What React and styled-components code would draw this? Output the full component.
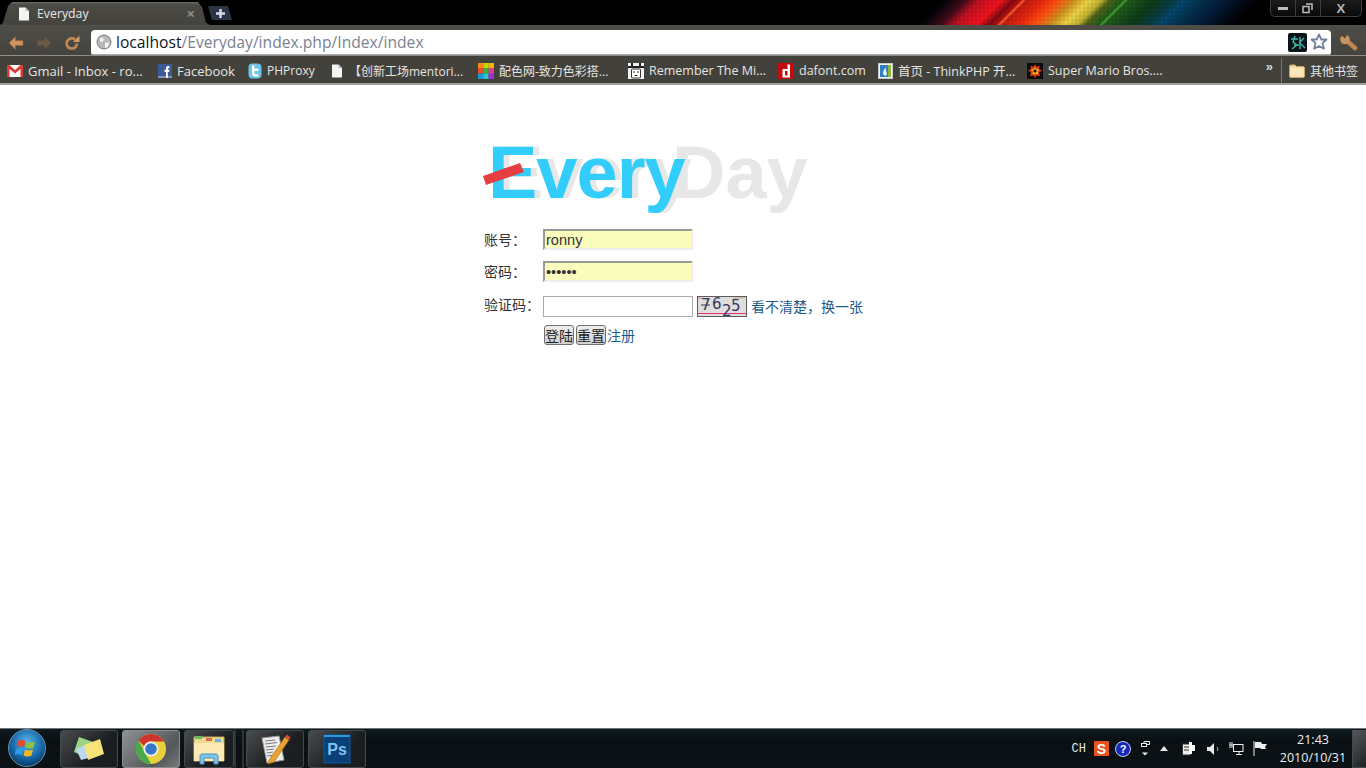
import React from "react";
import styled, { createGlobalStyle } from "styled-components";

const Global = createGlobalStyle`
  html, body { margin: 0; padding: 0; background: #fff; overflow: hidden; }
  #root { height: 768px; }
  * { box-sizing: border-box; }
`;

const rainbow = [
  [930, "#000"], [940, "#150510"], [953, "#400a18"], [968, "#c01020"], [990, "#f0121e"], [1002, "#800a10"],
  [1009, "#b01010"], [1012, "#ff5a28"], [1015, "#c01a10"], [1033, "#e82a10"], [1045, "#ff4a10"], [1063, "#d09020"],
  [1077, "#ecd044"], [1090, "#c0b030"], [1098, "#506018"], [1111, "#1f5a18"], [1114, "#3fa030"], [1117, "#1f5a18"],
  [1143, "#0c3a18"], [1160, "#0a3a40"], [1173, "#05466a"], [1190, "#03304f"], [1213, "#021a38"], [1237, "#01050f"], [1250, "#000"],
];
const rainbowStops = rainbow.map(([x, c]) => `${c} ${((x + 12) * 0.7071).toFixed(1)}px`).join(", ");

const Screen = styled.div`
  width: 1366px; height: 768px; display: flex; flex-direction: column;
  font-family: "Liberation Sans", "Noto Sans CJK SC", sans-serif;
`;

/* ---------- browser chrome ---------- */
const TitleBar = styled.div`
  height: 25px; flex: none; display: flex; align-items: flex-end;
  justify-content: space-between;
  background:
    radial-gradient(circle, transparent 55%, rgba(0, 0, 0, 0.1) 65%) 0 0 / 4px 4px,
    linear-gradient(135deg, ${rainbowStops}, #000 100%),
    #000;
`;
const TabGroup = styled.div`
  display: flex; align-items: flex-end; height: 100%;
`;
const Tab = styled.div`
  width: 210px; height: 23px; display: flex; align-items: center; padding: 0 15px 0 17px; gap: 6px;
  background: linear-gradient(#6a6964, #4b4a45 12%, #44433e);
  clip-path: polygon(0 100%, 3px 90%, 8px 4px, 12px 0, 198px 0, 202px 5px, 206px 90%, 210px 100%);
  color: #e8e8e8; font: 12.3px "Open Sans", sans-serif;
`;
const TabTitle = styled.span`flex: 1; margin-top: -1px;`;
const TabClose = styled.span`color: #8e8e8a; font-size: 15px; line-height: 1; font-weight: 700;`;
const NewTab = styled.div`
  width: 24px; height: 14px; margin: 0 0 5px -2px; display: flex; align-items: center; justify-content: center;
  background: #2d3445; clip-path: polygon(0 0, 20px 0, 24px 100%, 4px 100%);
`;
const WindowButtons = styled.div`
  align-self: flex-start; display: flex; width: 92px; height: 17px; margin-right: 4px;
  border: 1px solid #3c3c3c; border-top: none; border-radius: 0 0 5px 5px;
  background: linear-gradient(#1b1b1b, #0a0a0a);
`;
const WinBtn = styled.div`
  flex: ${p => p.$grow || 1}; display: flex; align-items: center; justify-content: center;
  color: #b5b5b5; border-left: ${p => (p.$first ? "none" : "1px solid #3c3c3c")};
  font: 700 13px "Liberation Sans", sans-serif;
`;

const Toolbar = styled.div`
  height: 31px; flex: none; display: flex; align-items: center; padding: 5px 6px 0 8px;
  background: linear-gradient(#4e4d48, #44433e);
  border-bottom: 1px solid #8d8d8b;
`;
const NavIcons = styled.div`
  display: flex; align-items: center; gap: 12px; width: 83px;
`;
const AddressBar = styled.div`
  width: 1240px; height: 25px; display: flex; align-items: center; padding: 0 3px 0 5px;
  background: #fff; border-radius: 4px 4px 2px 2px; border-bottom: 1px solid #a8a8a8;
`;
const Url = styled.div`
  flex: 1; margin-left: 4px; font: 15.65px "Open Sans", sans-serif; color: #7b8290; white-space: nowrap;
`;
const Host = styled.span`color: #0c1626;`;
const Wrench = styled.div`margin-left: 9px; display: flex;`;

const Bookmarks = styled.div`
  height: 29px; flex: none; display: flex; align-items: center; padding: 2px 0 0 7px;
  background: #42413c; border-bottom: 2px solid #a0a09e;
`;
const Mark = styled.div`
  display: flex; align-items: center; gap: 5px; flex: none; width: ${p => p.$w}px;
  color: #e6e6e2; font: ${p => p.$fs || 12.5}px "Open Sans", "Noto Sans CJK SC", sans-serif; white-space: nowrap;
`;
const MarkSpacer = styled.div`flex: 1;`;
const Chevron = styled.div`
  color: #ddd; font: 700 13px "Liberation Sans", sans-serif; margin: -9px 9px 0 0; letter-spacing: -1px;
`;
const MarkDivider = styled.div`width: 1px; height: 25px; background: #77766f; margin-right: 7px;`;

/* ---------- page ---------- */
const Page = styled.main`
  flex: 1; background: #fff; padding-top: 45px;
`;
const Center = styled.div`
  width: 400px; margin: 0 auto; padding-left: 1px;
`;
const LogoBox = styled.div`height: 96px;`;
const Form = styled.form`
  display: flex; flex-direction: column; margin-top: 3px;
`;
const Row = styled.div`
  display: flex; align-items: flex-start; height: ${p => p.$h || 32}px;
`;
const Label = styled.label`
  width: 59px; flex: none; font: 14px/20px "Noto Sans CJK SC", sans-serif; color: #333; margin-top: ${p => p.$top || 0}px;
`;
const Input = styled.input`
  width: 150px; height: 21px; padding: 0 1px; margin: 0; outline: none;
  font: 14.6px "Liberation Sans", sans-serif; color: #333;
  background: ${p => (p.$filled ? "#fbfdbd" : "#fff")};
  border: ${p => (p.$filled ? "2px" : "1px")} solid ${p => (p.$filled ? "#eeeeee" : "#ababab")};
  ${p => p.$filled && "border-top-color: #999; border-left-color: #999;"}
`;
const Captcha = styled.div`margin: 0 4px; width: 50px; height: 21px; flex: none; display: flex;`;
const TextLink = styled.a`
  font: 14px/22px "Noto Sans CJK SC", sans-serif; color: #1d5a8c; text-decoration: none; white-space: nowrap;
  margin-top: ${p => p.$top || 0}px;
`;
const ActionRow = styled.div`display: flex; align-items: center; margin-left: 60px; height: 20px;`;
const Btn = styled.button`
  width: 30px; height: 20px; padding: 0; margin-right: ${p => p.$gap || 0}px; flex: none;
  font: 14px/16px "Noto Sans CJK SC", sans-serif; color: #222;
  background: linear-gradient(#eeeeee, #d0d0d0); border: 1px solid #707070; border-radius: 3px;
`;

/* ---------- taskbar ---------- */
const Taskbar = styled.footer`
  height: 40px; flex: none; display: flex; align-items: center; padding-left: 60px; position: relative;
  background: linear-gradient(#0d1a20, #0a1014 30%, #0b1216);
  border-top: 1px solid #6e7478;
`;
const Orb = styled.div`
  position: absolute; left: 8px; top: 0; width: 38px; height: 38px;
`;
const TaskBtn = styled.div`
  width: ${p => p.$w || 58}px; height: 38px; margin-right: ${p => p.$gap ?? 4}px; flex: none;
  display: flex; align-items: center; justify-content: center;
  border: 1px solid ${p => (p.$active ? "#8c8f90" : "#44494c")}; border-radius: 3px;
  background: ${p => p.$active
    ? "linear-gradient(135deg, #8f9294, #55585a 70%, #77797b)"
    : "linear-gradient(135deg, #4a4c4d, #1c1f21 60%, #1a1d1f)"};
`;
const Grip = styled.div`
  width: 10px; height: 38px; margin: 0 2px 0 -4px; flex: none;
  border-left: 2px solid #2f3336; border-right: 2px solid #2f3336;
`;
const Tray = styled.div`
  margin-left: auto; display: flex; align-items: center; height: 100%;
`;
const TrayText = styled.span`
  font: 12px "Liberation Mono", monospace; color: #e8e8e8; margin-right: 7px;
`;
const TrayIcon = styled.div`
  display: flex; align-items: center; justify-content: center; flex: none;
  width: ${p => p.$w || 16}px; margin-right: ${p => p.$gap || 8}px;
`;
const Clock = styled.div`
  width: 72px; text-align: center; color: #f0f0f0; font: 12.5px/18px "Open Sans", sans-serif;
  margin-right: 3px;
`;
const ShowDesktop = styled.div`
  width: 14px; height: 38px; background: linear-gradient(135deg, #55585a, #202326);
  border: 1px solid #44494c; border-top: none; border-right: none;
`;

/* ---------- icons ---------- */
const PageIcon = ({ s = 14 }) => (
  <svg width={s} height={s} viewBox="0 0 14 14">
    <path d="M2 0.5h6.5L12 4v9.5H2z" fill="#f4f4f4" />
    <path d="M8.5 .5V4H12z" fill="#bbb" />
  </svg>
);
const Arrow = ({ dir, c, d }) => (
  <svg width="16" height="16" viewBox="0 0 16 16" style={dir > 0 ? { transform: "scaleX(-1)" } : undefined}>
    <path d="M1 8l6.500-6.500v4h7.500v5H7.500v4z" fill={c} stroke={d} strokeWidth="0.700" strokeLinejoin="round" />
  </svg>
);
const Reload = () => (
  <svg width="16" height="16" viewBox="0 0 16 16" fill="none">
    <path d="M13 8.500a5.200 5.200 0 1 1-1.800-4" stroke="#c08650" strokeWidth="2.800" />
    <path d="M9 7h6.500V.5z" fill="#d39a63" />
  </svg>
);
const Globe = () => (
  <svg width="16" height="16" viewBox="0 0 16 16">
    <circle cx="8" cy="8" r="7" fill="#b9b9b9" stroke="#7d7d7d" />
    <path d="M4 3.500l4 1-1 3-3 .5zM9 9l4-1-1 5-3 1z" fill="#f3f3f3" />
  </svg>
);
const Star = () => (
  <svg width="18" height="18" viewBox="0 0 18 18">
    <path d="M9 1.500l2.300 5h5.200l-4 3.700 1.400 5.600L9 12.900l-4.900 2.900 1.400-5.600-4-3.700h5.200z" fill="#fff" stroke="#75809c" strokeWidth="1.800" strokeLinejoin="round" />
  </svg>
);
const ExtIcon = () => (
  <svg width="19" height="19" viewBox="0 0 19 19" style={{ marginRight: 3 }}>
    <rect width="19" height="19" rx="2" fill="#0b1416" />
    <path d="M3 6h7M7 3l-2 6 4 3-5 4M12 4v12M11 10l5-5M12 10l5 5M6 12h5" stroke="#41b6ad" strokeWidth="1.400" fill="none" />
  </svg>
);
const WrenchIcon = () => (
  <svg width="18" height="17" viewBox="0 0 18 17">
    <path d="M6.500 6.500l8.500 7.500" stroke="#bd8656" strokeWidth="4.500" strokeLinecap="round" />
    <circle cx="5" cy="5.500" r="4.800" fill="#c9935f" />
    <path d="M1 0.500h6L5 4.500z" fill="#44433e" />
  </svg>
);
const GmailIcon = () => (
  <svg width="16" height="12" viewBox="0 0 16 12">
    <rect width="16" height="12" fill="#fafafa" />
    <path d="M0 0h2.500L8 5l5.500-5H16v12h-2.500V4L8 8.500 2.500 4v8H0z" fill="#d93c33" />
  </svg>
);
const FbIcon = () => (
  <svg width="14" height="14" viewBox="0 0 14 14">
    <rect width="14" height="14" fill="#3b5a9a" />
    <rect y="12" width="14" height="2" fill="#7f93c0" />
    <path d="M8 14V8H6.500V5.800H8V4.300C8 2.600 9 2 10.200 2h1.300v2.200h-1c-.5 0-.7.3-.7.7v.9h1.700L11 8H9.800v6z" fill="#fff" />
  </svg>
);
const TwIcon = () => (
  <svg width="14" height="16" viewBox="0 0 14 16">
    <rect x="0.500" y="0.500" width="13" height="15" rx="4" fill="#6cc4ea" />
    <path d="M4 2.500h2.400v3h4v2.400h-4v2c0 1 .6 1.300 1.400 1.300h2.600v2.300H7.400C5 13.500 4 12.400 4 10.300z" fill="#fff" />
  </svg>
);
const ColorIcon = () => (
  <svg width="16" height="16" viewBox="0 0 16 16">
    <rect width="5.400" height="5.400" fill="#f58a1f" />
    <rect x="5.300" width="5.400" height="5.400" fill="#c4d800" />
    <rect x="10.600" width="5.400" height="5.400" fill="#f2b705" />
    <rect y="5.300" width="5.400" height="5.400" fill="#f04e23" />
    <rect x="5.300" y="5.300" width="5.400" height="5.400" fill="#33b44a" />
    <rect x="10.600" y="5.300" width="5.400" height="5.400" fill="#e5398f" />
    <rect y="10.600" width="5.400" height="5.400" fill="#1b9ad6" />
    <rect x="5.300" y="10.600" width="5.400" height="5.400" fill="#2fc4c4" />
    <rect x="10.600" y="10.600" width="5.400" height="5.400" fill="#9b2fd6" />
  </svg>
);
const RtmIcon = () => (
  <svg width="16" height="16" viewBox="0 0 16 16">
    <rect width="16" height="16" fill="#f2f2f2" />
    <path d="M0 3h3V0h2v3h6V0h2v3h3v2H0z" fill="#222" />
    <rect x="3.500" y="6" width="9" height="9" rx="1" fill="#fff" stroke="#333" />
    <path d="M6 8v2M10 8v2M6.500 12.500h3" stroke="#222" />
  </svg>
);
const DafontIcon = () => (
  <svg width="16" height="16" viewBox="0 0 16 16">
    <rect width="16" height="16" fill="#c50b0b" />
    <path d="M9.500 1.500h2.500v13H4.500V6h5zM7 8v4.500h2.500V8z" fill="#fff" fillRule="evenodd" />
  </svg>
);
const ThinkIcon = () => (
  <svg width="15" height="16" viewBox="0 0 15 16">
    <rect x="0.500" y="0.500" width="14" height="15" fill="#f3f3f3" stroke="#c9c9c9" />
    <rect x="2" y="2" width="8" height="12" fill="#2f7fc4" />
    <rect x="10" y="2" width="3" height="12" fill="#8ab83a" />
    <path d="M7 3c1 3-2 4-2 7 0 2 2 3 3 2.500 2-1 0-4-1-9.500z" fill="#fff" />
  </svg>
);
const MarioIcon = () => (
  <svg width="16" height="16" viewBox="0 0 16 16">
    <rect width="16" height="16" fill="#0b0b0b" />
    <path d="M8 1l1.500 3 3-1.500-.5 3.500 3 1.500-3 2 1 3.500-3.500-.5L8 15l-1.500-2.500-3.500.5 1-3.500-3-2 3-1.500L3.500 2.500l3 1.500z" fill="#e63b12" />
    <path d="M8 4l1 2 3 .5-1.500 2 .5 3-3-1-2.500 1 .5-3L4 6.500l3-.5z" fill="#f5d90a" />
    <circle cx="8" cy="8" r="1.800" fill="#222" />
  </svg>
);
const FolderIcon = () => (
  <svg width="16" height="14" viewBox="0 0 16 14">
    <path d="M.5 2.500c0-1 .5-1.500 1.500-1.500h4l1.500 1.500h6.500c1 0 1.500.5 1.500 1.500v8c0 1-.5 1.500-1.500 1.500H2c-1 0-1.500-.5-1.500-1.500z" fill="#f7d79a" stroke="#c7a668" />
    <rect x="1.500" y="4" width="13" height="8.500" fill="#fbe6b9" />
  </svg>
);
const CaptchaImg = () => (
  <svg width="50" height="21" viewBox="0 0 50 21" style={{ overflow: "visible" }}>
    <rect x="0.500" y="0.500" width="49" height="20" fill="#dedede" stroke="#5c5c5c" />
    <path d="M1 17.500h48" stroke="#e8336f" fill="none" />
    <path d="M1 2l12 1M36 2l12 0" stroke="#c9a28a" />
    <path d="M4 9h9" stroke="#37375a" />
    <text x="4" y="14" fontFamily="DejaVu Sans" fontSize="15" fill="#37375a">7</text>
    <text x="15" y="13" fontFamily="DejaVu Sans" fontSize="15" fill="#37375a">6</text>
    <text x="25" y="19.500" fontFamily="DejaVu Sans" fontSize="15" fill="#37375a">2</text>
    <text x="34" y="15" fontFamily="DejaVu Sans" fontSize="15" fill="#37375a">5</text>
  </svg>
);
const Logo = () => (
  <svg width="340" height="96" viewBox="0 0 340 96" style={{ display: "block", overflow: "visible" }}>
    <text y="68" fontFamily="Liberation Sans" fontWeight="700" fontSize="74" fill="#e7e7e7">
      <tspan x="10" letterSpacing="-1">Every</tspan>
      <tspan x="188">Day</tspan>
    </text>
    <text x="4" y="68" fontFamily="Liberation Sans" fontWeight="700" fontSize="74" letterSpacing="-1" fill="#32cdfa">Every</text>
    <path d="M-1 46l37-13 4 9-38 13z" fill="#e63f42" />
  </svg>
);
const StartOrb = () => (
  <svg width="38" height="38" viewBox="0 0 38 38">
    <defs>
      <radialGradient id="orb" cx="50%" cy="35%" r="70%">
        <stop offset="0" stopColor="#5fb4e8" />
        <stop offset="0.6" stopColor="#1467a8" />
        <stop offset="1" stopColor="#0a2f52" />
      </radialGradient>
    </defs>
    <circle cx="19" cy="19" r="18.500" fill="url(#orb)" stroke="#7aa9c4" strokeWidth="0.800" />
    <path d="M10 12c3-1.500 5-1 7.500 0l-1.500 6c-2.500-1-4.500-1.500-7.500 0z" fill="#e8482c" />
    <path d="M19 12.500c2.500 1 4.500 1.500 8 0l-1.500 6c-3 1.500-5.500 1-8 0z" fill="#8cc63f" />
    <path d="M8 20c3-1.500 5-1 7.500 0L14 26c-2.500-1-4.500-1.500-7.500 0z" fill="#2f9be6" />
    <path d="M17 20.500c2.500 1 4.500 1.500 8 0L23.500 26.500c-3 1.500-5.500 1-8 0z" fill="#f5b71e" />
  </svg>
);
const NotesIcon = () => (
  <svg width="34" height="28" viewBox="0 0 34 28">
    <path d="M2 17L7 2l14 5-5 16z" fill="#9ad68a" />
    <path d="M4 14l10-4 6 12-11 3z" fill="#b9d9f0" />
    <path d="M12 10L28 4l4 15-16 6z" fill="#f8e27a" />
  </svg>
);
const ChromeIcon = () => (
  <svg width="32" height="32" viewBox="0 0 32 32">
    <circle cx="16" cy="16" r="15" fill="#e8d13c" />
    <path d="M16 1a15 15 0 0 1 13 7.500H16a7.500 7.500 0 0 0-7 4.500L3.500 7.500A15 15 0 0 1 16 1z" fill="#d0342c" />
    <path d="M3.500 7.500L9.500 19l6.500 12A15 15 0 0 1 3.500 7.500z" fill="#4aa84a" />
    <circle cx="16" cy="16" r="7.500" fill="#eee" />
    <circle cx="16" cy="16" r="5.800" fill="#3a76c8" />
  </svg>
);
const ExplorerIcon = () => (
  <svg width="32" height="32" viewBox="0 0 32 32">
    <path d="M1 4h30v24H1z" fill="#f0d98c" stroke="#c5a85a" />
    <rect x="2" y="3" width="7" height="3" fill="#5fbf5f" />
    <rect x="13" y="5" width="6" height="3" fill="#d96a4a" />
    <rect x="22" y="6" width="6" height="3" fill="#6ab0e0" />
    <path d="M1 10h30v18H1z" fill="#fbeab3" />
    <path d="M7 31v-8c0-1 1-2 2-2h14c1 0 2 1 2 2v8h-4v-6H11v6z" fill="#7cc4ea" stroke="#4a90c0" />
  </svg>
);
const NotepadIcon = () => (
  <svg width="32" height="34" viewBox="0 0 32 34">
    <path d="M3 6l17-2 5 24-17 3z" fill="#eee" stroke="#999" />
    <path d="M6 9l10-1M6 12l12-1.500M7 15l10-1M7 18l8-1M8 21l6-1M8 24l8-1" stroke="#777" />
    <path d="M10 28L26 5l4 3-15 22-6 2z" fill="#e8a32e" stroke="#a86a10" strokeWidth="0.600" />
    <path d="M26 5l2-2.500 3.500 3L30 8z" fill="#d94a3a" />
  </svg>
);
const PsIcon = () => (
  <svg width="30" height="30" viewBox="0 0 30 30">
    <rect x="2" y="1" width="26" height="28" fill="#0a3f78" stroke="#0e5aa0" />
    <rect x="2" y="1" width="26" height="2" fill="#2a9ae0" />
    <text x="15" y="21" textAnchor="middle" fontFamily="Liberation Sans" fontWeight="700" fontSize="16" fill="#7fc4f0">Ps</text>
  </svg>
);

export default function App() {
  return (
    <Screen>
      <Global />
      <TitleBar>
        <TabGroup>
          <Tab>
            <PageIcon />
            <TabTitle>Everyday</TabTitle>
            <TabClose>×</TabClose>
          </Tab>
          <NewTab>
            <svg width="9" height="9" viewBox="0 0 11 11"><path d="M4 0h3v4h4v3H7v4H4V7H0V4h4z" fill="#d5dbe8" /></svg>
          </NewTab>
        </TabGroup>
        <WindowButtons>
          <WinBtn $first>
            <svg width="10" height="4" viewBox="0 0 10 4"><rect width="10" height="3" y="1" fill="#bdbdbd" /></svg>
          </WinBtn>
          <WinBtn>
            <svg width="11" height="11" viewBox="0 0 11 11" fill="none" stroke="#bdbdbd" strokeWidth="1.500"><rect x="1" y="3.500" width="6" height="6" /><path d="M4 1h6v6" /></svg>
          </WinBtn>
          <WinBtn $grow={1.7}>X</WinBtn>
        </WindowButtons>
      </TitleBar>

      <Toolbar>
        <NavIcons>
          <Arrow c="#cf9462" d="#8a5f3a" />
          <Arrow dir={1} c="#6b5a45" d="#5a4c3c" />
          <Reload />
        </NavIcons>
        <AddressBar>
          <Globe />
          <Url><Host>localhost</Host>/Everyday/index.php/Index/index</Url>
          <ExtIcon />
          <Star />
        </AddressBar>
        <Wrench><WrenchIcon /></Wrench>
      </Toolbar>

      <Bookmarks>
        <Mark $w={151} $fs={13}><GmailIcon />Gmail - Inbox - ro...</Mark>
        <Mark $w={90} $fs={13}><FbIcon />Facebook</Mark>
        <Mark $w={82} $fs={12}><TwIcon />PHProxy</Mark>
        <Mark $w={148} $fs={12}><PageIcon />【创新工场mentori...</Mark>
        <Mark $w={150} $fs={12}><ColorIcon />配色网-致力色彩搭...</Mark>
        <Mark $w={150}><RtmIcon />Remember The Mi...</Mark>
        <Mark $w={100}><DafontIcon />dafont.com</Mark>
        <Mark $w={149}><ThinkIcon />首页 - ThinkPHP 开...</Mark>
        <Mark $w={140}><MarioIcon />Super Mario Bros....</Mark>
        <MarkSpacer />
        <Chevron>»</Chevron>
        <MarkDivider />
        <Mark $w={77} $fs={12}><FolderIcon />其他书签</Mark>
      </Bookmarks>

      <Page>
        <Center>
          <LogoBox><Logo /></LogoBox>
          <Form>
            <Row>
              <Label htmlFor="acc">账号：</Label>
              <Input id="acc" $filled defaultValue="ronny" />
            </Row>
            <Row $h={35}>
              <Label htmlFor="pwd">密码：</Label>
              <Input id="pwd" $filled type="password" defaultValue="123456" />
            </Row>
            <Row $h={29}>
              <Label htmlFor="code" $top={-2}>验证码：</Label>
              <Input id="code" />
              <Captcha><CaptchaImg /></Captcha>
              <TextLink href="#" $top={-1}>看不清楚，换一张</TextLink>
            </Row>
            <ActionRow>
              <Btn type="button" $gap={2}>登陆</Btn>
              <Btn type="reset" $gap={1}>重置</Btn>
              <TextLink href="#">注册</TextLink>
            </ActionRow>
          </Form>
        </Center>
      </Page>

      <Taskbar>
        <Orb><StartOrb /></Orb>
        <TaskBtn><NotesIcon /></TaskBtn>
        <TaskBtn $active><ChromeIcon /></TaskBtn>
        <TaskBtn $w={50} $gap={4}><ExplorerIcon /></TaskBtn>
        <Grip />
        <TaskBtn><NotepadIcon /></TaskBtn>
        <TaskBtn $gap={0}><PsIcon /></TaskBtn>
        <Tray>
          <TrayText>CH</TrayText>
          <TrayIcon $gap={6}>
            <svg width="15" height="15" viewBox="0 0 15 15"><rect width="15" height="15" rx="1" fill="#e8541c" /><text x="7.500" y="12.500" textAnchor="middle" fontFamily="Liberation Sans" fontWeight="700" fontSize="14" fill="#fff">S</text></svg>
          </TrayIcon>
          <TrayIcon $gap={10}>
            <svg width="16" height="16" viewBox="0 0 16 16"><circle cx="8" cy="8" r="7.500" fill="#1828b8" stroke="#c8d0e8" /><text x="8" y="12" textAnchor="middle" fontFamily="Liberation Sans" fontWeight="700" fontSize="11" fill="#fff">?</text></svg>
          </TrayIcon>
          <TrayIcon $w={9} $gap={9}>
            <svg width="9" height="17" viewBox="0 0 9 17" fill="none" stroke="#eee"><rect x="0.500" y="3.500" width="5" height="3" /><path d="M3 3V1.500h5.500v3H6" /><path d="M1 12.500h6l-3 3z" fill="#eee" stroke="none" /></svg>
          </TrayIcon>
          <TrayIcon $w={9} $gap={14}>
            <svg width="8" height="5" viewBox="0 0 8 5"><path d="M4 0l4 5H0z" fill="#e6e6e6" /></svg>
          </TrayIcon>
          <TrayIcon $w={14} $gap={11}>
            <svg width="14" height="15" viewBox="0 0 14 15"><rect x="0.500" y="3" width="8" height="11" fill="#eee" stroke="#333" /><path d="M7 1h3v3h3v6h-3v3H7z" fill="#fff" /><path d="M2 6h5M2 9h5" stroke="#333" /></svg>
          </TrayIcon>
          <TrayIcon $w={13} $gap={9}>
            <svg width="13" height="14" viewBox="0 0 13 14"><path d="M0 5h3l4-4v12L3 9H0z" fill="#e8e8e8" /><path d="M10 5c1 1 1 3 0 4" stroke="#aaa" fill="none" /></svg>
          </TrayIcon>
          <TrayIcon $w={15} $gap={9}>
            <svg width="15" height="15" viewBox="0 0 15 15" fill="none" stroke="#eee"><rect x="4.500" y="3.500" width="9.500" height="7" /><path d="M1 1v6M3 1v6M0.500 4h3M7 13.500h6M10 11v2" /></svg>
          </TrayIcon>
          <TrayIcon $w={15} $gap={9}>
            <svg width="15" height="15" viewBox="0 0 15 15"><path d="M1 0v15" stroke="#eee" /><path d="M2 1h6l1 2h5l-2 3 1 2H8L7 7H2z" fill="#eee" /></svg>
          </TrayIcon>
          <Clock>21:43<br />2010/10/31</Clock>
          <ShowDesktop />
        </Tray>
      </Taskbar>
    </Screen>
  );
}
